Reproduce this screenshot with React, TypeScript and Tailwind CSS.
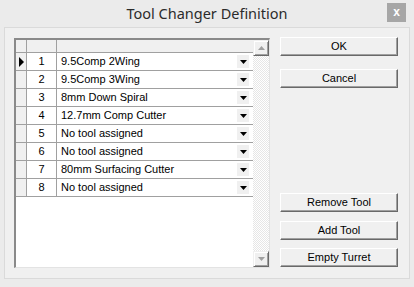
import React from "react";

const tools = [
  "9.5Comp 2Wing",
  "9.5Comp 3Wing",
  "8mm Down Spiral",
  "12.7mm Comp Cutter",
  "No tool assigned",
  "No tool assigned",
  "80mm Surfacing Cutter",
  "No tool assigned",
];

function Btn({ label, className = "" }: { label: string; className?: string }) {
  return (
    <button
      className={
        "w-[118px] h-[19px] bg-[#f0f0f0] border border-t-white border-l-white border-r-[#696969] border-b-[#696969] shadow-[inset_-1px_-1px_0_#a0a0a0] text-[11px] leading-none text-black flex items-center justify-center " +
        className
      }
    >
      {label}
    </button>
  );
}

function ScrollBtn({ up }: { up: boolean }) {
  return (
    <div className="w-[16px] h-[16px] bg-[#f0f0f0] border border-t-[#f0f0f0] border-l-[#f0f0f0] border-r-[#696969] border-b-[#696969] shadow-[inset_1px_1px_0_#fff,inset_-1px_-1px_0_#a0a0a0] flex items-center justify-center">
      <svg width="7" height="4" viewBox="0 0 7 4">
        {up ? <path d="M3.5 0 L7 4 L0 4 Z" fill="#a0a0a0" /> : <path d="M0 0 L7 0 L3.5 4 Z" fill="#a0a0a0" />}
      </svg>
    </div>
  );
}

export default function App() {
  return (
    <div className="w-[414px] h-[287px] bg-[#ebebeb] flex flex-col font-['Liberation_Sans',Arial,sans-serif] select-none">
      <div className="relative h-[27px] flex items-center justify-center">
        <span className="font-['Noto_Sans',sans-serif] text-[14.5px] text-[#2b2b2b] pt-[1px]">Tool Changer Definition</span>
        <div className="absolute left-[387px] top-[3px] w-[19px] h-[19px] bg-[#a6a6a6] flex items-center justify-center text-white text-[12px] font-bold leading-none pb-[2px]">
          x
        </div>
      </div>

      <div className="mx-[4px] h-[252px] bg-[#f0f0f0] border border-[#dadada] flex items-start pl-[9px] pt-[10px] pr-[10px]">
        <div className="w-[256px] h-[230px] border-t-2 border-l-2 border-t-[#8a8a8a] border-l-[#8a8a8a] border-b border-r border-b-[#e3e3e3] border-r-[#e3e3e3] bg-white flex">
          <div className="flex-1 flex flex-col">
            <div className="flex h-[13px] border-b border-[#a0a0a0] bg-[#f0f0f0]">
              <div className="w-[11px] border-r border-[#a0a0a0]" />
              <div className="w-[30px] border-r border-[#a0a0a0]" />
              <div className="flex-1" />
            </div>
            {tools.map((t, i) => (
              <div key={i} className="flex h-[18px] border-b border-[#a0a0a0]">
                <div className="w-[11px] bg-[#f0f0f0] border-r border-[#a0a0a0] flex items-center pl-[3px]">
                  {i === 0 && (
                    <svg width="5" height="10" viewBox="0 0 5 10">
                      <path d="M0 0 L5 5 L0 10 Z" fill="#000" />
                    </svg>
                  )}
                </div>
                <div className="w-[30px] border-r border-[#a0a0a0] flex items-center justify-center text-[11px] text-black">
                  {i + 1}
                </div>
                <div className="flex-1 flex items-center justify-between pl-[4px] pr-[4px] text-[11px] text-black">
                  <span>{t}</span>
                  <div className="w-[12px] h-[13px] bg-[#f0f0f0] flex items-center justify-center">
                    <svg width="7" height="4" viewBox="0 0 7 4">
                      <path d="M0 0 L7 0 L3.5 4 Z" fill="#000" />
                    </svg>
                  </div>
                </div>
              </div>
            ))}
          </div>
          <div className="w-[16px] flex flex-col bg-[repeating-conic-gradient(#e6e6e6_0_25%,#fff_0_50%)] bg-[length:2px_2px]">
            <ScrollBtn up />
            <div className="flex-1" />
            <ScrollBtn up={false} />
          </div>
        </div>

        <div className="ml-[10px] h-[230px] -mt-[1px] flex flex-col">
          <Btn label="OK" />
          <Btn label="Cancel" className="mt-[13px]" />
          <div className="flex-1" />
          <Btn label="Remove Tool" />
          <Btn label="Add Tool" className="mt-[9px]" />
          <Btn label="Empty Turret" className="mt-[8px]" />
        </div>
      </div>
    </div>
  );
}
